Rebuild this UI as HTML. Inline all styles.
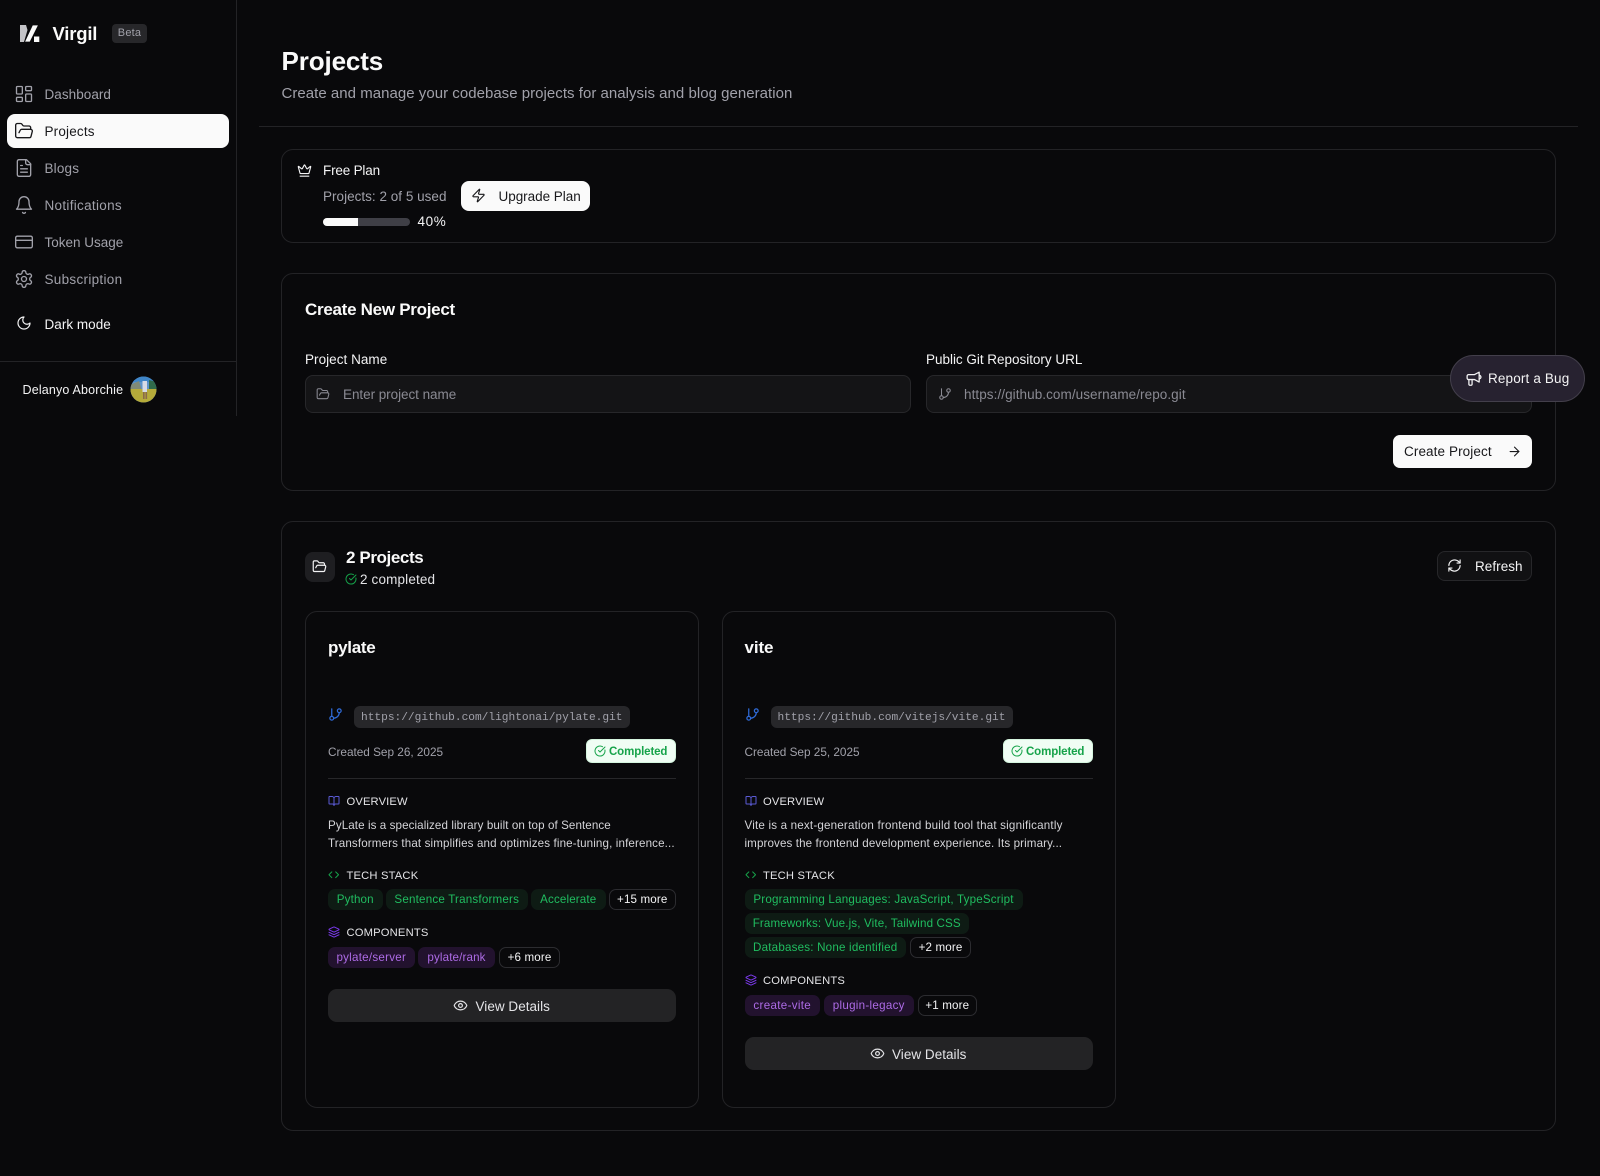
<!DOCTYPE html>
<html lang="en"><head><meta charset="utf-8"><title>Projects</title>
<style>
*{box-sizing:border-box;margin:0;padding:0}
html,body{width:1600px;height:1176px;overflow:hidden;background:#09090b}
body{position:relative;font-family:"Liberation Sans",sans-serif;color:#fafafa}
.t{position:absolute;white-space:nowrap;line-height:20px;height:20px}
.b{position:absolute}
.card{position:absolute;border:1px solid #232326;border-radius:12px}
svg.i{position:absolute;fill:none;stroke:currentColor;stroke-width:2;stroke-linecap:round;stroke-linejoin:round}
.nav{font-size:13.5px;color:#a1a1aa;letter-spacing:.18px}
.up{font-size:11.2px;letter-spacing:.14px;color:#e4e4e7}
.desc{font-size:11.6px;color:#d4d4d8;letter-spacing:.13px}
.pill{position:absolute;height:20.5px;line-height:22.5px;border-radius:7px;font-size:11.6px;text-align:center;white-space:nowrap;letter-spacing:.14px}
.g{background:#0e1b14;color:#20bd60}
.p{background:#22122e;color:#ad6be6}
.m{border:1px solid #2c2c30;color:#f4f4f5;line-height:20.5px}
.btn{position:absolute;background:#232325;border-radius:9px;height:33px}
</style></head><body>
<svg width="0" height="0" style="position:absolute"><defs>
<symbol id="dash" viewBox="0 0 24 24"><rect x="3" y="3" width="7" height="9" rx="1"/><rect x="14" y="3" width="7" height="5" rx="1"/><rect x="14" y="12" width="7" height="9" rx="1"/><rect x="3" y="16" width="7" height="5" rx="1"/></symbol>
<symbol id="folder" viewBox="0 0 24 24"><path d="m6 14 1.5-2.9A2 2 0 0 1 9.24 10H20a2 2 0 0 1 1.94 2.5l-1.54 6a2 2 0 0 1-1.95 1.5H4a2 2 0 0 1-2-2V5a2 2 0 0 1 2-2h3.9a2 2 0 0 1 1.69.9l.81 1.2a2 2 0 0 0 1.67.9H18a2 2 0 0 1 2 2v2"/></symbol>
<symbol id="file" viewBox="0 0 24 24"><path d="M15 2H6a2 2 0 0 0-2 2v16a2 2 0 0 0 2 2h12a2 2 0 0 0 2-2V7Z"/><path d="M14 2v4a2 2 0 0 0 2 2h4"/><path d="M10 9H8"/><path d="M16 13H8"/><path d="M16 17H8"/></symbol>
<symbol id="bell" viewBox="0 0 24 24"><path d="M6 8a6 6 0 0 1 12 0c0 7 3 9 3 9H3s3-2 3-9"/><path d="M10.3 21a1.94 1.94 0 0 0 3.4 0"/></symbol>
<symbol id="cardi" viewBox="0 0 24 24"><rect x="2" y="5" width="20" height="14" rx="2"/><line x1="2" y1="10" x2="22" y2="10"/></symbol>
<symbol id="gear" viewBox="0 0 24 24"><path d="M12.22 2h-.44a2 2 0 0 0-2 2v.18a2 2 0 0 1-1 1.73l-.43.25a2 2 0 0 1-2 0l-.15-.08a2 2 0 0 0-2.73.73l-.22.38a2 2 0 0 0 .73 2.73l.15.1a2 2 0 0 1 1 1.72v.51a2 2 0 0 1-1 1.74l-.15.09a2 2 0 0 0-.73 2.73l.22.38a2 2 0 0 0 2.73.73l.15-.08a2 2 0 0 1 2 0l.43.25a2 2 0 0 1 1 1.73V20a2 2 0 0 0 2 2h.44a2 2 0 0 0 2-2v-.18a2 2 0 0 1 1-1.73l.43-.25a2 2 0 0 1 2 0l.15.08a2 2 0 0 0 2.73-.73l.22-.39a2 2 0 0 0-.73-2.73l-.15-.08a2 2 0 0 1-1-1.74v-.5a2 2 0 0 1 1-1.74l.15-.09a2 2 0 0 0 .73-2.73l-.22-.38a2 2 0 0 0-2.73-.73l-.15.08a2 2 0 0 1-2 0l-.43-.25a2 2 0 0 1-1-1.73V4a2 2 0 0 0-2-2z"/><circle cx="12" cy="12" r="3"/></symbol>
<symbol id="moon" viewBox="0 0 24 24"><path d="M12 3a6 6 0 0 0 9 9 9 9 0 1 1-9-9Z"/></symbol>
<symbol id="crown" viewBox="0 0 24 24"><path d="M11.562 3.266a.5.5 0 0 1 .876 0L15.39 8.87a1 1 0 0 0 1.516.294L21.183 5.5a.5.5 0 0 1 .798.519l-2.834 10.246a1 1 0 0 1-.956.734H5.81a1 1 0 0 1-.957-.734L2.02 6.02a.5.5 0 0 1 .798-.519l4.276 3.664a1 1 0 0 0 1.516-.294z"/><path d="M5 21h14"/></symbol>
<symbol id="zap" viewBox="0 0 24 24"><path d="M4 14a1 1 0 0 1-.78-1.63l9.9-10.2a.5.5 0 0 1 .86.46l-1.92 6.02A1 1 0 0 0 13 10h7a1 1 0 0 1 .78 1.63l-9.9 10.2a.5.5 0 0 1-.86-.46l1.92-6.02A1 1 0 0 0 11 14z"/></symbol>
<symbol id="git" viewBox="0 0 24 24"><line x1="6" y1="3" x2="6" y2="15"/><circle cx="18" cy="6" r="3"/><circle cx="6" cy="18" r="3"/><path d="M18 9a9 9 0 0 1-9 9"/></symbol>
<symbol id="arrow" viewBox="0 0 24 24"><path d="M5 12h14"/><path d="m12 5 7 7-7 7"/></symbol>
<symbol id="mega" viewBox="0 0 24 24"><path d="M3 8.5a2 2 0 0 1 2-2h8.5L20 3v14l-6.500-3.500H5a2 2 0 0 1-2-2z" /><path d="M5.500 13.500V20a1.500 1.500 0 0 0 1.500 1.500h1.500a1.500 1.500 0 0 0 1.500-1.500v-6.500"/><path d="M20 7.500a2.500 2.500 0 0 1 0 5"/></symbol>
<symbol id="refresh" viewBox="0 0 24 24"><path d="M3 12a9 9 0 0 1 9-9 9.750 9.750 0 0 1 6.740 2.740L21 8"/><path d="M21 3v5h-5"/><path d="M21 12a9 9 0 0 1-9 9 9.750 9.750 0 0 1-6.740-2.740L3 16"/><path d="M8 16H3v5"/></symbol>
<symbol id="check" viewBox="0 0 24 24"><path d="M21.801 10A10 10 0 1 1 17 3.335"/><path d="m9 11 3 3L22 4"/></symbol>
<symbol id="book" viewBox="0 0 24 24"><path d="M12 7v14"/><path d="M3 18a1 1 0 0 1-1-1V4a1 1 0 0 1 1-1h5a4 4 0 0 1 4 4 4 4 0 0 1 4-4h5a1 1 0 0 1 1 1v13a1 1 0 0 1-1 1h-6a3 3 0 0 0-3 3 3 3 0 0 0-3-3z"/></symbol>
<symbol id="code" viewBox="0 0 24 24"><path d="m16 18 6-6-6-6"/><path d="m8 6-6 6 6 6"/></symbol>
<symbol id="layers" viewBox="0 0 24 24"><path d="M12.830 2.180a2 2 0 0 0-1.660 0L2.600 6.080a1 1 0 0 0 0 1.830l8.580 3.910a2 2 0 0 0 1.660 0l8.580-3.900a1 1 0 0 0 0-1.830Z"/><path d="m22 17.650-9.170 4.160a2 2 0 0 1-1.660 0L2 17.650"/><path d="m22 12.650-9.170 4.160a2 2 0 0 1-1.660 0L2 12.650"/></symbol>
<symbol id="eye" viewBox="0 0 24 24"><path d="M2.062 12.348a1 1 0 0 1 0-.696 10.750 10.750 0 0 1 19.876 0 1 1 0 0 1 0 .696 10.750 10.750 0 0 1-19.876 0"/><circle cx="12" cy="12" r="3"/></symbol>
</defs></svg>

<!-- sidebar -->
<div class="b" style="left:236px;top:0;width:1px;height:416px;background:#232326"></div>
<div class="b" style="left:0;top:361px;width:236px;height:1px;background:#232326"></div>
<svg class="b" style="left:18px;top:22px" width="24" height="22" viewBox="0 0 24 22"><polygon points="2,3 8,3 9.500,8 6,20 2,20" fill="#c4c4c8"/><polygon points="14.500,3 20.500,3 12,20 6.500,20" fill="#fafafa" stroke="#09090b" stroke-width=".8"/><rect x="16" y="14.500" width="5.300" height="5.500" fill="#fafafa"/></svg>
<div class="t" style="left:52.500px;top:24px;font-size:18.500px;font-weight:700;letter-spacing:-.2px">Virgil</div>
<div class="b" style="left:112px;top:24px;width:35px;height:19px;background:#27272a;border-radius:4px;font-size:11px;line-height:19px;text-align:center;color:#a1a1aa;letter-spacing:.2px">Beta</div>

<div class="b" style="left:7px;top:114px;width:222px;height:34px;background:#fafafa;border-radius:8px"></div>
<svg class="i" style="left:14px;top:84px;color:#a1a1aa;stroke-width:1.600" width="20" height="20"><use href="#dash"/></svg>
<svg class="i" style="left:14px;top:121px;color:#18181b;stroke-width:1.600" width="20" height="20"><use href="#folder"/></svg>
<svg class="i" style="left:14px;top:158px;color:#a1a1aa;stroke-width:1.600" width="20" height="20"><use href="#file"/></svg>
<svg class="i" style="left:14px;top:195px;color:#a1a1aa;stroke-width:1.600" width="20" height="20"><use href="#bell"/></svg>
<svg class="i" style="left:14px;top:232px;color:#a1a1aa;stroke-width:1.600" width="20" height="20"><use href="#cardi"/></svg>
<svg class="i" style="left:14px;top:269px;color:#a1a1aa;stroke-width:1.600" width="20" height="20"><use href="#gear"/></svg>
<svg class="i" style="left:16px;top:315px;color:#f4f4f5;stroke-width:1.800" width="16" height="16"><use href="#moon"/></svg>
<div class="t nav" style="left:44.500px;top:85px;letter-spacing:.05px">Dashboard</div>
<div class="t nav" style="left:44.500px;top:122px;color:#18181b">Projects</div>
<div class="t nav" style="left:44.500px;top:159px">Blogs</div>
<div class="t nav" style="left:44.500px;top:196px;letter-spacing:.3px">Notifications</div>
<div class="t nav" style="left:44.500px;top:233px;letter-spacing:0">Token Usage</div>
<div class="t nav" style="left:44.500px;top:270px;letter-spacing:.3px">Subscription</div>
<div class="t nav" style="left:44.500px;top:315px;color:#f4f4f5;letter-spacing:.03px">Dark mode</div>
<div class="t" style="left:22.500px;top:380px;font-size:12.500px;color:#f4f4f5;letter-spacing:.17px">Delanyo Aborchie</div>
<svg class="b" style="left:130px;top:376px" width="27" height="27" viewBox="0 0 27 27"><defs><clipPath id="av"><circle cx="13.500" cy="13.500" r="13"/></clipPath></defs><g clip-path="url(#av)"><rect width="27" height="27" fill="#5d93c9"/><rect y="0" width="27" height="6" fill="#3f86c9"/><polygon points="0,9 9,5 12,15 0,16" fill="#7f8a78"/><polygon points="19,4 27,6 27,15 19,15" fill="#2f6a4a"/><rect y="13" width="27" height="14" fill="#b5ab3a"/><rect x="12.500" y="5" width="4.500" height="11" fill="#d6dbe6"/><rect x="13" y="16" width="1.600" height="7" fill="#8a6a4a"/><rect x="15.500" y="16" width="1.600" height="7" fill="#8a6a4a"/></g></svg>

<!-- header -->
<div class="t" style="left:281.500px;top:49px;height:24px;line-height:24px;font-size:26px;font-weight:700;letter-spacing:-.12px">Projects</div>
<div class="t" style="left:281.500px;top:84px;font-size:15px;color:#a1a1aa;letter-spacing:.03px">Create and manage your codebase projects for analysis and blog generation</div>
<div class="b" style="left:259px;top:126px;width:1319px;height:1px;background:#232326"></div>

<!-- plan -->
<div class="card" style="left:281px;top:149px;width:1274.500px;height:94px"></div>
<svg class="i" style="left:297px;top:163px;color:#f4f4f5;stroke-width:1.800" width="15" height="15"><use href="#crown"/></svg>
<div class="t" style="left:323px;top:160.500px;font-size:13.500px;color:#f4f4f5;letter-spacing:-.18px">Free Plan</div>
<div class="t" style="left:323px;top:186.500px;font-size:13.500px;color:#a1a1aa;letter-spacing:.02px">Projects: 2 of 5 used</div>
<div class="b" style="left:461px;top:181px;width:129px;height:30px;background:#fafafa;border-radius:8px"></div>
<svg class="i" style="left:471px;top:188px;color:#18181b;stroke-width:1.800" width="15" height="15"><use href="#zap"/></svg>
<div class="t" style="left:498.500px;top:186.500px;font-size:13.500px;color:#18181b;letter-spacing:-.03px">Upgrade Plan</div>
<div class="b" style="left:323px;top:218px;width:87px;height:7.500px;background:#3f3f46;border-radius:4px;overflow:hidden"><div style="width:35px;height:100%;background:#fafafa"></div></div>
<div class="t" style="left:417.500px;top:212px;font-size:13.500px;color:#f4f4f5;letter-spacing:.6px">40%</div>

<!-- create -->
<div class="card" style="left:281px;top:273px;width:1274.500px;height:218px"></div>
<div class="t" style="left:305px;top:300px;font-size:17px;font-weight:700;letter-spacing:-.28px">Create New Project</div>
<div class="t" style="left:305px;top:350px;font-size:13.500px;color:#f4f4f5;letter-spacing:.04px">Project Name</div>
<div class="t" style="left:926px;top:350px;font-size:13.500px;color:#f4f4f5;letter-spacing:-.02px">Public Git Repository URL</div>
<div class="b" style="left:305px;top:375px;width:606px;height:37.500px;background:#141416;border:1px solid #27272a;border-radius:8px"></div>
<div class="b" style="left:926px;top:375px;width:606px;height:37.500px;background:#141416;border:1px solid #27272a;border-radius:8px"></div>
<svg class="i" style="left:316px;top:387px;color:#8a8a93;stroke-width:1.800" width="14" height="14"><use href="#folder"/></svg>
<svg class="i" style="left:938px;top:387px;color:#8a8a93;stroke-width:1.800" width="14" height="14"><use href="#git"/></svg>
<div class="t" style="left:343px;top:385px;font-size:13.500px;color:#8a8a93;letter-spacing:-.05px">Enter project name</div>
<div class="t" style="left:964px;top:385px;font-size:13.500px;color:#8a8a93;letter-spacing:.07px">https://github.com/username/repo.git</div>
<div class="b" style="left:1393px;top:435px;width:139px;height:33px;background:#fafafa;border-radius:7px"></div>
<div class="t" style="left:1404px;top:442px;font-size:13.500px;color:#18181b;letter-spacing:.1px">Create Project</div>
<svg class="i" style="left:1506.500px;top:444px;color:#18181b;stroke-width:1.800" width="15" height="15"><use href="#arrow"/></svg>

<!-- report -->
<div class="b" style="left:1450px;top:355px;width:135px;height:47px;background:#272230;border:1.500px solid #433f4b;border-radius:24px"></div>
<svg class="i" style="left:1465px;top:370px;color:#f4f4f5;stroke-width:1.800" width="17" height="17"><use href="#mega"/></svg>
<div class="t" style="left:1488px;top:369px;font-size:13.500px;color:#f4f4f5;letter-spacing:.15px;font-weight:400">Report a Bug</div>

<!-- projects -->
<div class="card" style="left:281px;top:521px;width:1274.500px;height:610px"></div>
<div class="b" style="left:305px;top:552px;width:29.500px;height:29.500px;background:#1e1e21;border-radius:8px"></div>
<svg class="i" style="left:312px;top:558.500px;color:#f4f4f5;stroke-width:1.900" width="15" height="15"><use href="#folder"/></svg>
<div class="t" style="left:346px;top:548px;font-size:17px;font-weight:700;letter-spacing:-.4px">2 Projects</div>
<svg class="i" style="left:345px;top:573px;color:#16a34a;stroke-width:2" width="12" height="12"><use href="#check"/></svg>
<div class="t" style="left:360px;top:570px;font-size:13.500px;color:#e4e4e7;letter-spacing:.15px">2 completed</div>
<div class="b" style="left:1437px;top:551px;width:95px;height:30px;background:#111113;border:1px solid #27272a;border-radius:8px"></div>
<svg class="i" style="left:1447px;top:558px;color:#f4f4f5;stroke-width:1.800" width="15" height="15"><use href="#refresh"/></svg>
<div class="t" style="left:1475px;top:556.500px;font-size:13.500px;color:#f4f4f5;letter-spacing:.05px">Refresh</div>

<!-- card 1 -->
<div class="card" style="left:304.500px;top:611px;width:394.500px;height:497px"></div>
<div class="t" style="left:328px;top:638px;font-size:17px;font-weight:700;letter-spacing:-.28px">pylate</div>
<svg class="i" style="left:327.500px;top:707px;color:#2f6bd8;stroke-width:2" width="15" height="15"><use href="#git"/></svg>
<div class="b" style="left:354px;top:706px;width:276px;height:22px;background:#27272a;border-radius:6px;font:11.180px/24px 'Liberation Mono',monospace;color:#a1a1aa;padding-left:7px;white-space:nowrap">https://github.com/lightonai/pylate.git</div>
<div class="t" style="left:328px;top:742px;font-size:11.800px;color:#a1a1aa;letter-spacing:-.02px">Created Sep 26, 2025</div>
<div class="b" style="left:586px;top:739px;width:90px;height:24px;background:#f0fdf4;border:1px solid #d5f5df;border-radius:6px"></div>
<svg class="i" style="left:594px;top:745px;color:#16a34a;stroke-width:2" width="12" height="12"><use href="#check"/></svg>
<div class="t" style="left:609px;top:742px;font-size:11.500px;color:#16a34a;font-weight:700;letter-spacing:-.12px">Completed</div>
<div class="b" style="left:328px;top:778px;width:348px;height:1px;background:#27272a"></div>

<svg class="i" style="left:328px;top:795px;color:#5b5bd6;stroke-width:2" width="12" height="12"><use href="#book"/></svg>
<div class="t up" style="left:346.500px;top:791.500px">OVERVIEW</div>
<div class="t desc" style="left:328px;top:816px;letter-spacing:.09px">PyLate is a specialized library built on top of Sentence</div>
<div class="t desc" style="left:328px;top:834px">Transformers that simplifies and optimizes fine-tuning, inference...</div>
<svg class="i" style="left:328px;top:869px;color:#16a34a;stroke-width:2" width="11.500" height="11.500"><use href="#code"/></svg>
<div class="t up" style="left:346.500px;top:865.500px;letter-spacing:.18px">TECH STACK</div>
<div class="pill g" style="left:328px;top:889px;width:54.500px">Python</div>
<div class="pill g" style="left:386px;top:889px;width:141.500px;letter-spacing:.2px">Sentence Transformers</div>
<div class="pill g" style="left:531px;top:889px;width:74.500px">Accelerate</div>
<div class="pill m" style="left:609px;top:889px;width:66.500px">+15 more</div>
<svg class="i" style="left:328px;top:926px;color:#7c3aed;stroke-width:2" width="12" height="12"><use href="#layers"/></svg>
<div class="t up" style="left:346.500px;top:922.500px;letter-spacing:.18px">COMPONENTS</div>
<div class="pill p" style="left:328px;top:947px;width:86.500px;letter-spacing:.25px">pylate/server</div>
<div class="pill p" style="left:418px;top:947px;width:77px">pylate/rank</div>
<div class="pill m" style="left:499px;top:947px;width:61px">+6 more</div>
<div class="btn" style="left:328px;top:989px;width:348px"></div>
<svg class="i" style="left:453px;top:998px;color:#e4e4e7;stroke-width:1.900" width="15" height="15"><use href="#eye"/></svg>
<div class="t" style="left:475.500px;top:996.500px;font-size:13.500px;color:#e4e4e7;letter-spacing:.03px">View Details</div>

<!-- card 2 -->
<div class="card" style="left:721.500px;top:611px;width:394px;height:497px"></div>
<div class="t" style="left:744.500px;top:638px;font-size:17px;font-weight:700;letter-spacing:-.1px">vite</div>
<svg class="i" style="left:744.500px;top:707px;color:#2f6bd8;stroke-width:2" width="15" height="15"><use href="#git"/></svg>
<div class="b" style="left:770.500px;top:706px;width:242px;height:22px;background:#27272a;border-radius:6px;font:11.180px/24px 'Liberation Mono',monospace;color:#a1a1aa;padding-left:7px;white-space:nowrap">https://github.com/vitejs/vite.git</div>
<div class="t" style="left:744.500px;top:742px;font-size:11.800px;color:#a1a1aa;letter-spacing:-.02px">Created Sep 25, 2025</div>
<div class="b" style="left:1003px;top:739px;width:90px;height:24px;background:#f0fdf4;border:1px solid #d5f5df;border-radius:6px"></div>
<svg class="i" style="left:1011px;top:745px;color:#16a34a;stroke-width:2" width="12" height="12"><use href="#check"/></svg>
<div class="t" style="left:1026px;top:742px;font-size:11.500px;color:#16a34a;font-weight:700;letter-spacing:-.12px">Completed</div>
<div class="b" style="left:745px;top:778px;width:348px;height:1px;background:#27272a"></div>

<svg class="i" style="left:745px;top:795px;color:#5b5bd6;stroke-width:2" width="12" height="12"><use href="#book"/></svg>
<div class="t up" style="left:763px;top:791.500px">OVERVIEW</div>
<div class="t desc" style="left:744.500px;top:816px;letter-spacing:.19px">Vite is a next-generation frontend build tool that significantly</div>
<div class="t desc" style="left:744.500px;top:834px;letter-spacing:.11px">improves the frontend development experience. Its primary...</div>
<svg class="i" style="left:745px;top:869px;color:#16a34a;stroke-width:2" width="11.500" height="11.500"><use href="#code"/></svg>
<div class="t up" style="left:763px;top:865.500px;letter-spacing:.18px">TECH STACK</div>
<div class="pill g" style="left:744.500px;top:889px;width:278px;letter-spacing:.19px">Programming Languages: JavaScript, TypeScript</div>
<div class="pill g" style="left:744.500px;top:913px;width:224.500px">Frameworks: Vue.js, Vite, Tailwind CSS</div>
<div class="pill g" style="left:744.500px;top:937px;width:161.500px;letter-spacing:.2px">Databases: None identified</div>
<div class="pill m" style="left:910px;top:937px;width:61px">+2 more</div>
<svg class="i" style="left:745px;top:974px;color:#7c3aed;stroke-width:2" width="12" height="12"><use href="#layers"/></svg>
<div class="t up" style="left:763px;top:970.500px;letter-spacing:.18px">COMPONENTS</div>
<div class="pill p" style="left:744.500px;top:995px;width:75.500px;letter-spacing:.32px">create-vite</div>
<div class="pill p" style="left:823.500px;top:995px;width:90.500px;letter-spacing:.28px">plugin-legacy</div>
<div class="pill m" style="left:917.500px;top:995px;width:59.500px">+1 more</div>
<div class="btn" style="left:744.500px;top:1037px;width:348.500px"></div>
<svg class="i" style="left:870px;top:1046px;color:#e4e4e7;stroke-width:1.900" width="15" height="15"><use href="#eye"/></svg>
<div class="t" style="left:892px;top:1044.500px;font-size:13.500px;color:#e4e4e7;letter-spacing:.03px">View Details</div>
</body></html>
